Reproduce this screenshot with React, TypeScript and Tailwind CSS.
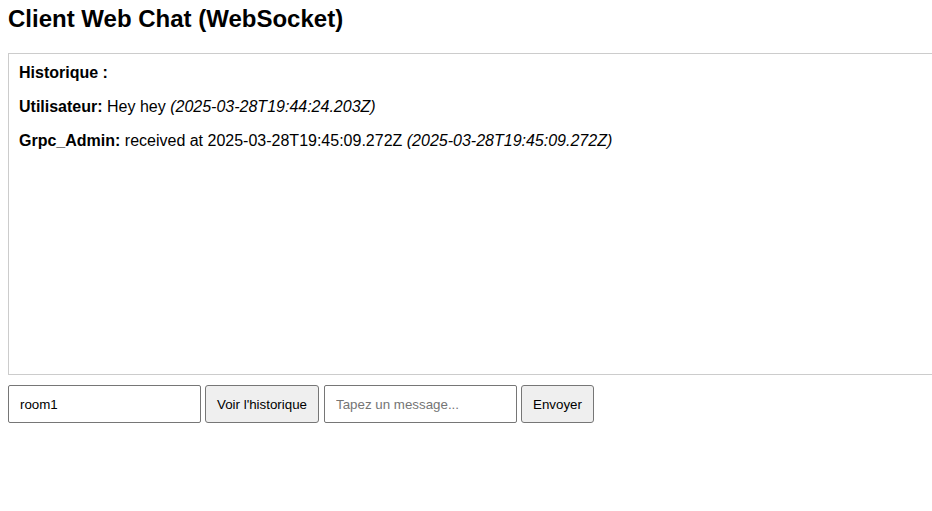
import { useState } from 'react'

const messages = [
  { user: 'Utilisateur', text: 'Hey hey', at: '2025-03-28T19:44:24.203Z' },
  { user: 'Grpc_Admin', text: 'received at 2025-03-28T19:45:09.272Z', at: '2025-03-28T19:45:09.272Z' },
]

export default function App() {
  const [room, setRoom] = useState('room1')
  const [draft, setDraft] = useState('')

  return (
    <div className="min-h-[511px] overflow-hidden bg-white px-2 text-black font-['Liberation_Sans',Arial,sans-serif]">
      <h2 className="mt-[5px] mb-5 text-2xl leading-[28px] font-bold">Client Web Chat (WebSocket)</h2>

      <div className="box-content h-[300px] w-full overflow-y-auto border border-[#ccc] p-[10px] text-base leading-[18px]">
        <strong>Historique :</strong>
        {messages.map((m) => (
          <p key={m.at} className="mt-4">
            <strong>{m.user}:</strong> {m.text} <em>({m.at})</em>
          </p>
        ))}
      </div>

      <div className="mt-[10px] flex gap-1 text-[13.33px]">
        <input
          value={room}
          onChange={(e) => setRoom(e.target.value)}
          className="h-[38px] w-[193px] rounded-[2px] border border-[#767676] px-[11px] pt-[1px] outline-none"
        />
        <button className="h-[38px] w-[114px] rounded-[3px] border border-[#767676] bg-[#efefef] pt-[1px]">
          Voir l'historique
        </button>
        <input
          value={draft}
          onChange={(e) => setDraft(e.target.value)}
          placeholder="Tapez un message..."
          className="ml-[1px] h-[38px] w-[193px] rounded-[2px] border border-[#767676] px-[11px] pt-[1px] outline-none placeholder:text-[#757575]"
        />
        <button className="h-[38px] w-[73px] rounded-[3px] border border-[#767676] bg-[#efefef] pt-[1px]">
          Envoyer
        </button>
      </div>
    </div>
  )
}
